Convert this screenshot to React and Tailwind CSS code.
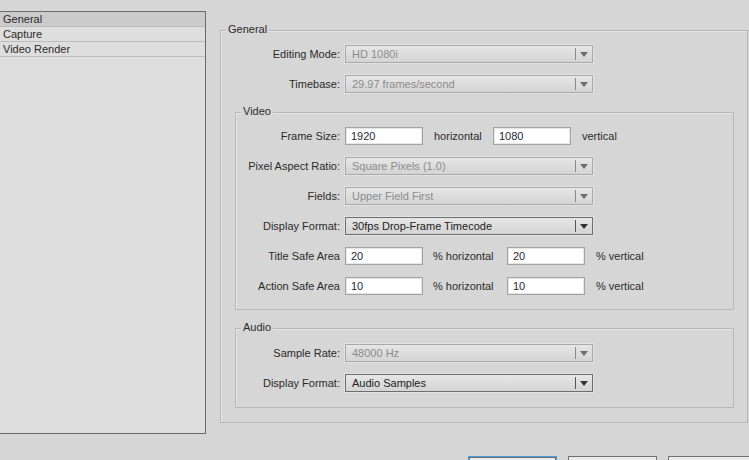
const font = { fontFamily: '"Liberation Sans", Arial, sans-serif' }

function Legend({ children }) {
  return (
    <span className="absolute left-[5px] -top-[9px] px-[2px] bg-[#d6d6d6] text-[11px] leading-[14px] text-[#2b2b2b]">
      {children}
    </span>
  )
}

function Dropdown({ value, disabled }) {
  return (
    <div
      className={`flex items-center h-[18px] w-[248px] border bg-gradient-to-b from-[#e6e6e6] to-[#d4d4d4] shadow-[0_0_0_1px_#e2e2e2] ${
        disabled ? 'border-[#a9a9a9] text-[#8c8c8c]' : 'border-[#6e6e6e] text-[#222]'
      }`}
    >
      <span className="flex-1 pl-[6px] text-[11px] leading-[16px] truncate">{value}</span>
      <span className={`w-px h-[12px] ${disabled ? 'bg-[#8a8a8a]' : 'bg-[#555]'}`} />
      <span className="w-[16px] flex justify-center">
        <svg width="8" height="5" viewBox="0 0 8 5">
          <path d="M0 0 L8 0 L4 5 Z" fill={disabled ? '#6e6e6e' : '#333'} />
        </svg>
      </span>
    </div>
  )
}

function Input({ value }) {
  return (
    <div className="h-[18px] w-[78px] border border-[#a3a3a3] bg-white shadow-[inset_0_0_0_1px_#e6e6e6] pl-[5px] text-[11px] leading-[16px] text-[#1f1f33]">
      {value}
    </div>
  )
}

function Row({ label, labelW, children, className = '' }) {
  return (
    <div className={`flex items-center h-[18px] ${className}`}>
      <span className={`${labelW} text-right text-[11px] text-[#2b2b2b] whitespace-nowrap`}>{label}</span>
      <div className="ml-[5px] flex items-center text-[11px] text-[#2b2b2b]">{children}</div>
    </div>
  )
}

export default function App() {
  return (
    <div style={font} className="w-[749px] h-[460px] overflow-hidden bg-[#d6d6d6] flex flex-col">
      <div className="flex items-start pt-[11px]">
        {/* ── Category list ── */}
        <div className="w-[206px] h-[423px] border-t border-r border-b border-[#6b6b6b] bg-[#dedede] shrink-0">
          {['General', 'Capture', 'Video Render'].map((item, i) => (
            <div
              key={item}
              className={`h-[15px] border-b border-[#bdbdbd] pl-[3px] text-[11px] leading-[14px] text-[#2b2b2b] ${
                i === 0 ? 'bg-[#cbcbcb]' : ''
              }`}
            >
              {item}
            </div>
          ))}
        </div>

        {/* ── General group ── */}
        <div className="relative ml-[14px] mt-[19px] w-[528px] h-[393px] border border-[#b7b7b7] shadow-[inset_1px_1px_0_#e6e6e6] shrink-0">
          <Legend>General</Legend>
          <div className="flex flex-col pt-[14px]">
            <Row label="Editing Mode:" labelW="w-[119px]">
              <Dropdown value="HD 1080i" disabled />
            </Row>
            <Row label="Timebase:" labelW="w-[119px]" className="mt-[12px]">
              <Dropdown value="29.97 frames/second" disabled />
            </Row>

            {/* Video */}
            <div className="relative ml-[14px] mt-[19px] w-[499px] h-[198px] border border-[#b7b7b7] shadow-[inset_1px_1px_0_#e6e6e6]">
              <Legend>Video</Legend>
              <div className="flex flex-col gap-[12px] pt-[14px]">
                <Row label="Frame Size:" labelW="w-[104px]">
                  <Input value="1920" />
                  <span className="ml-[11px] w-[59px]">horizontal</span>
                  <Input value="1080" />
                  <span className="ml-[11px]">vertical</span>
                </Row>
                <Row label="Pixel Aspect Ratio:" labelW="w-[104px]">
                  <Dropdown value="Square Pixels (1.0)" disabled />
                </Row>
                <Row label="Fields:" labelW="w-[104px]">
                  <Dropdown value="Upper Field First" disabled />
                </Row>
                <Row label="Display Format:" labelW="w-[104px]">
                  <Dropdown value="30fps Drop-Frame Timecode" />
                </Row>
                <Row label="Title Safe Area" labelW="w-[104px]">
                  <Input value="20" />
                  <span className="ml-[10px] w-[74px]">% horizontal</span>
                  <Input value="20" />
                  <span className="ml-[11px]">% vertical</span>
                </Row>
                <Row label="Action Safe Area" labelW="w-[104px]">
                  <Input value="10" />
                  <span className="ml-[10px] w-[74px]">% horizontal</span>
                  <Input value="10" />
                  <span className="ml-[11px]">% vertical</span>
                </Row>
              </div>
            </div>

            {/* Audio */}
            <div className="relative ml-[14px] mt-[18px] w-[499px] h-[80px] border border-[#b7b7b7] shadow-[inset_1px_1px_0_#e6e6e6]">
              <Legend>Audio</Legend>
              <div className="flex flex-col gap-[12px] pt-[15px]">
                <Row label="Sample Rate:" labelW="w-[104px]">
                  <Dropdown value="48000 Hz" disabled />
                </Row>
                <Row label="Display Format:" labelW="w-[104px]">
                  <Dropdown value="Audio Samples" />
                </Row>
              </div>
            </div>
          </div>
        </div>
      </div>

      {/* ── Dialog buttons ── */}
      <div className="flex gap-[11px] pl-[468px] mt-[22px] shrink-0">
        <button className="w-[89px] h-[23px] border border-[#4a9ee0] shadow-[inset_0_0_0_1px_#707070] bg-[#ececec] text-[11px] text-[#111] pt-[3px] shrink-0">
          OK
        </button>
        <button className="w-[89px] h-[23px] border border-[#707070] bg-[#ececec] text-[11px] text-[#111] pt-[3px] shrink-0">
          Cancel
        </button>
        <button className="w-[89px] h-[23px] border border-[#707070] bg-[#ececec] text-[11px] text-[#111] pt-[3px] shrink-0">
          Help
        </button>
      </div>
    </div>
  )
}
